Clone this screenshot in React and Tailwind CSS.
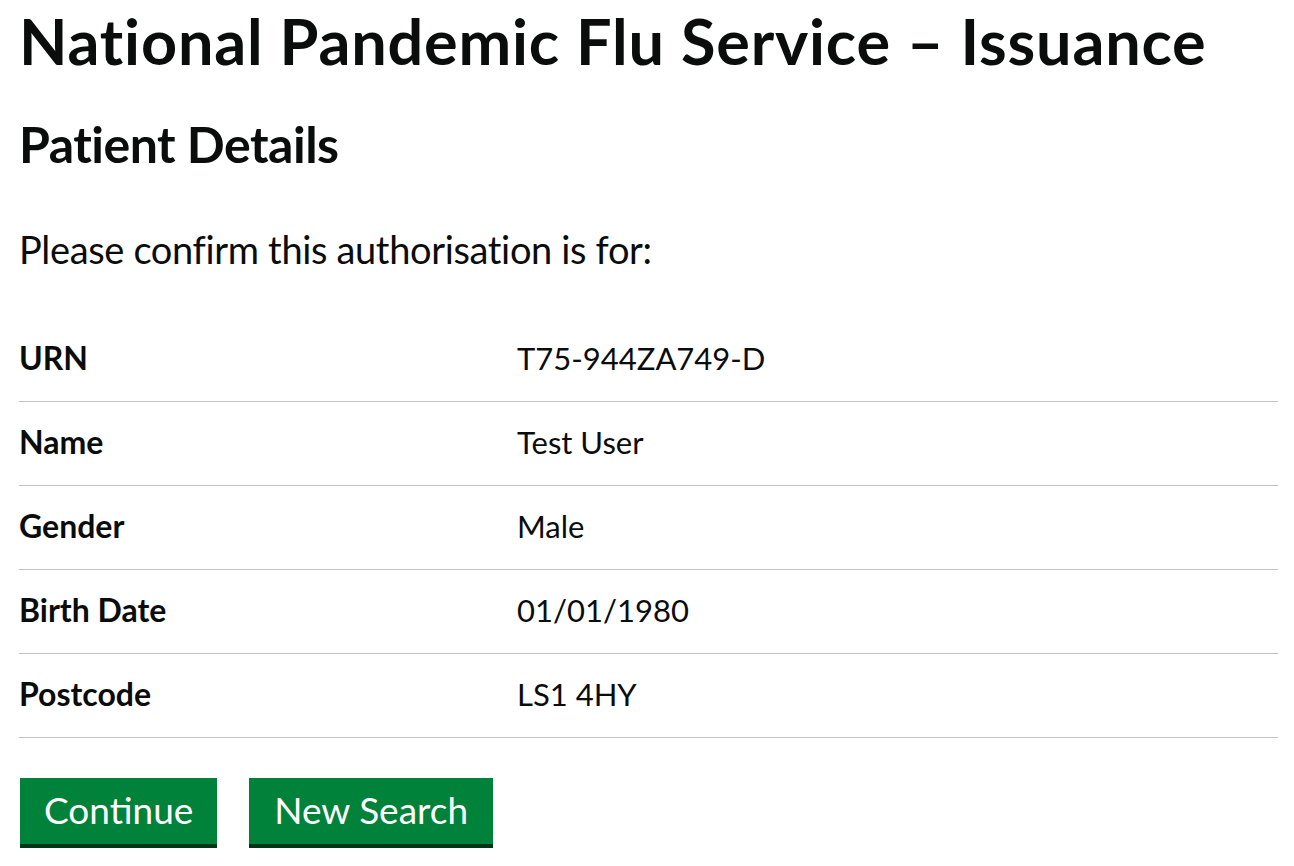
import React from "react";

const rows = [
  { label: "URN", value: "T75-944ZA749-D" },
  { label: "Name", value: "Test User" },
  { label: "Gender", value: "Male" },
  { label: "Birth Date", value: "01/01/1980" },
  { label: "Postcode", value: "LS1 4HY" },
];

const App = () => {
  return (
    <div className="min-h-screen bg-white pl-[19px] pr-[16px] pt-[9px] text-[#0b0c0c] font-['Lato',Arial,sans-serif]">
      <h1 className="text-[63px] leading-[63px] font-bold tracking-[0.8px]">
        National Pandemic Flu Service – Issuance
      </h1>

      <h2 className="mt-[47px] text-[50px] leading-[50px] font-bold tracking-[-0.5px]">Patient Details</h2>

      <p className="mt-[61px] text-[38px] leading-[38px] tracking-[-0.35px]">
        Please confirm this authorisation is for:
      </p>

      {/* patient summary */}
      <dl className="mt-[50px]">
        {rows.map((row) => (
          <div
            key={row.label}
            className="flex items-center h-[84px] pb-[3px] border-b border-[#bfc1c3] leading-[32px]"
          >
            <dt className="w-[498px] text-[32px] font-bold">{row.label}</dt>
            <dd className="text-[31px]">{row.value}</dd>
          </div>
        ))}
      </dl>

      <div className="mt-[40px] pl-px flex gap-[32px]">
        <button className="h-[66px] px-[24px] pb-[4px] bg-[#00823b] text-white text-[37px] leading-[37px] shadow-[0_4px_0_#003618]">
          Continue
        </button>
        <button className="h-[66px] px-[25px] pb-[4px] bg-[#00823b] text-white text-[37px] leading-[37px] shadow-[0_4px_0_#003618]">
          New Search
        </button>
      </div>
    </div>
  );
};

export default App;
